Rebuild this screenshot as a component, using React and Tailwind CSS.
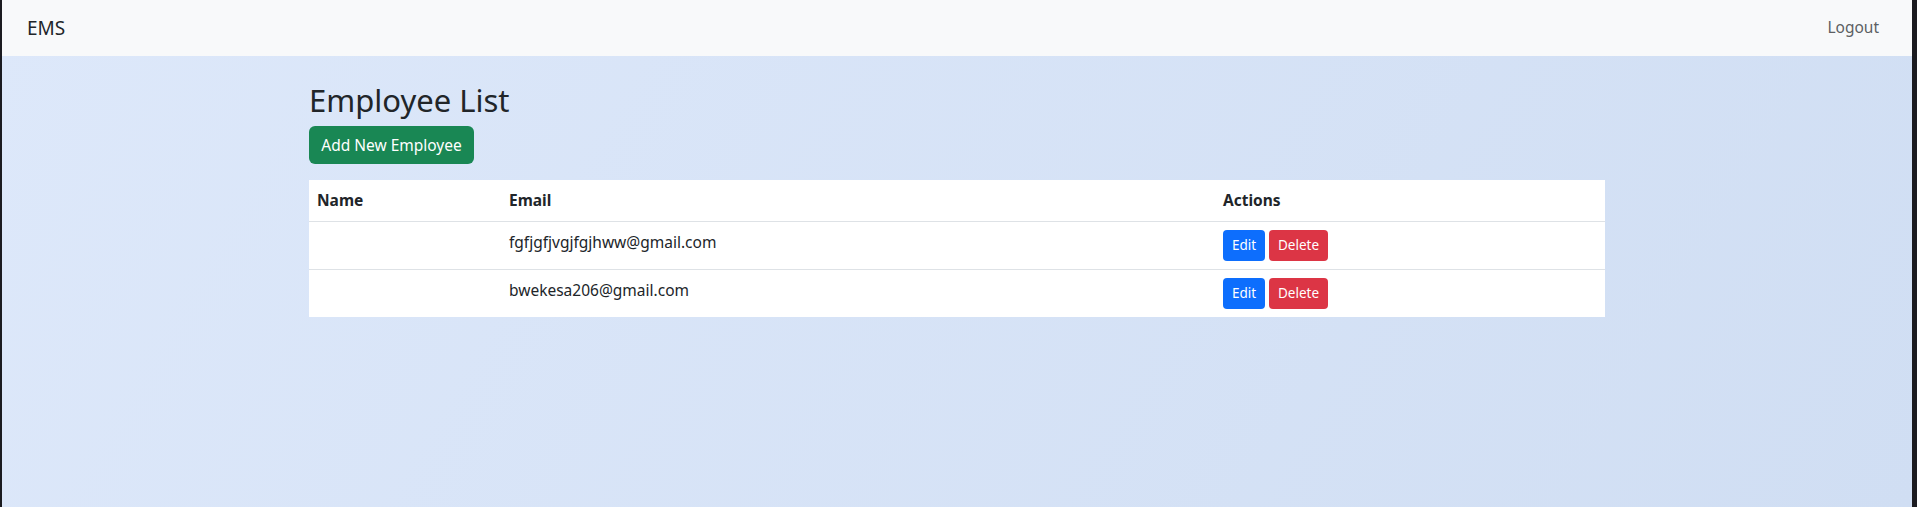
export default function App() {
  const rows = [
    { name: "", email: "fgfjgfjvgjfgjhww@gmail.com" },
    { name: "", email: "bwekesa206@gmail.com" },
  ];
  return (
    <div
      className="flex h-[507px] w-full bg-[#1b1b20] pl-[2px] pr-[5px]"
      style={{ fontFamily: '"Noto Sans", "Open Sans", sans-serif' }}
    >
      <div className="flex min-w-0 flex-1 flex-col bg-[linear-gradient(120deg,#dde8fa,#d0def3)] text-[#212529]">
        <nav className="flex h-[56px] items-center justify-between bg-[#f8f9fa] pl-[25px] pr-[33px]">
          <span className="text-[19px] leading-none">EMS</span>
          <span className="text-[15.5px] leading-none text-[#5c5f63]">Logout</span>
        </nav>
        <div className="mx-auto w-[1320px] px-[12px] pt-[26px]">
          <h2 className="text-[31px] leading-[1.2] font-normal">Employee List</h2>
          <button className="mt-[7px] h-[38px] w-[165px] rounded-[6px] bg-[#198754] text-[15.5px] text-white">
            Add New Employee
          </button>
          <table className="mt-[16px] w-full border-collapse bg-white text-[15.5px]">
            <thead>
              <tr className="h-[41px] border-b border-[#dee2e6]">
                <th className="w-[192px] px-[8px] text-left align-middle font-bold">Name</th>
                <th className="w-[714px] px-[8px] text-left align-middle font-bold">Email</th>
                <th className="px-[8px] text-left align-middle font-bold">Actions</th>
              </tr>
            </thead>
            <tbody>
              {rows.map((r, i) => (
                <tr
                  key={i}
                  className={`h-[48px] ${i < rows.length - 1 ? "border-b border-[#dee2e6]" : ""}`}
                >
                  <td className="px-[8px] pt-[9px] align-top">{r.name}</td>
                  <td className="px-[8px] pt-[9px] align-top">{r.email}</td>
                  <td className="px-[8px] align-middle">
                    <div className="flex gap-[4px]">
                      <button className="h-[31px] w-[42px] rounded-[4px] bg-[#0d6efd] text-[13.5px] text-white">
                        Edit
                      </button>
                      <button className="h-[31px] w-[59px] rounded-[4px] bg-[#dc3545] text-[13.5px] text-white">
                        Delete
                      </button>
                    </div>
                  </td>
                </tr>
              ))}
            </tbody>
          </table>
        </div>
      </div>
    </div>
  );
}
